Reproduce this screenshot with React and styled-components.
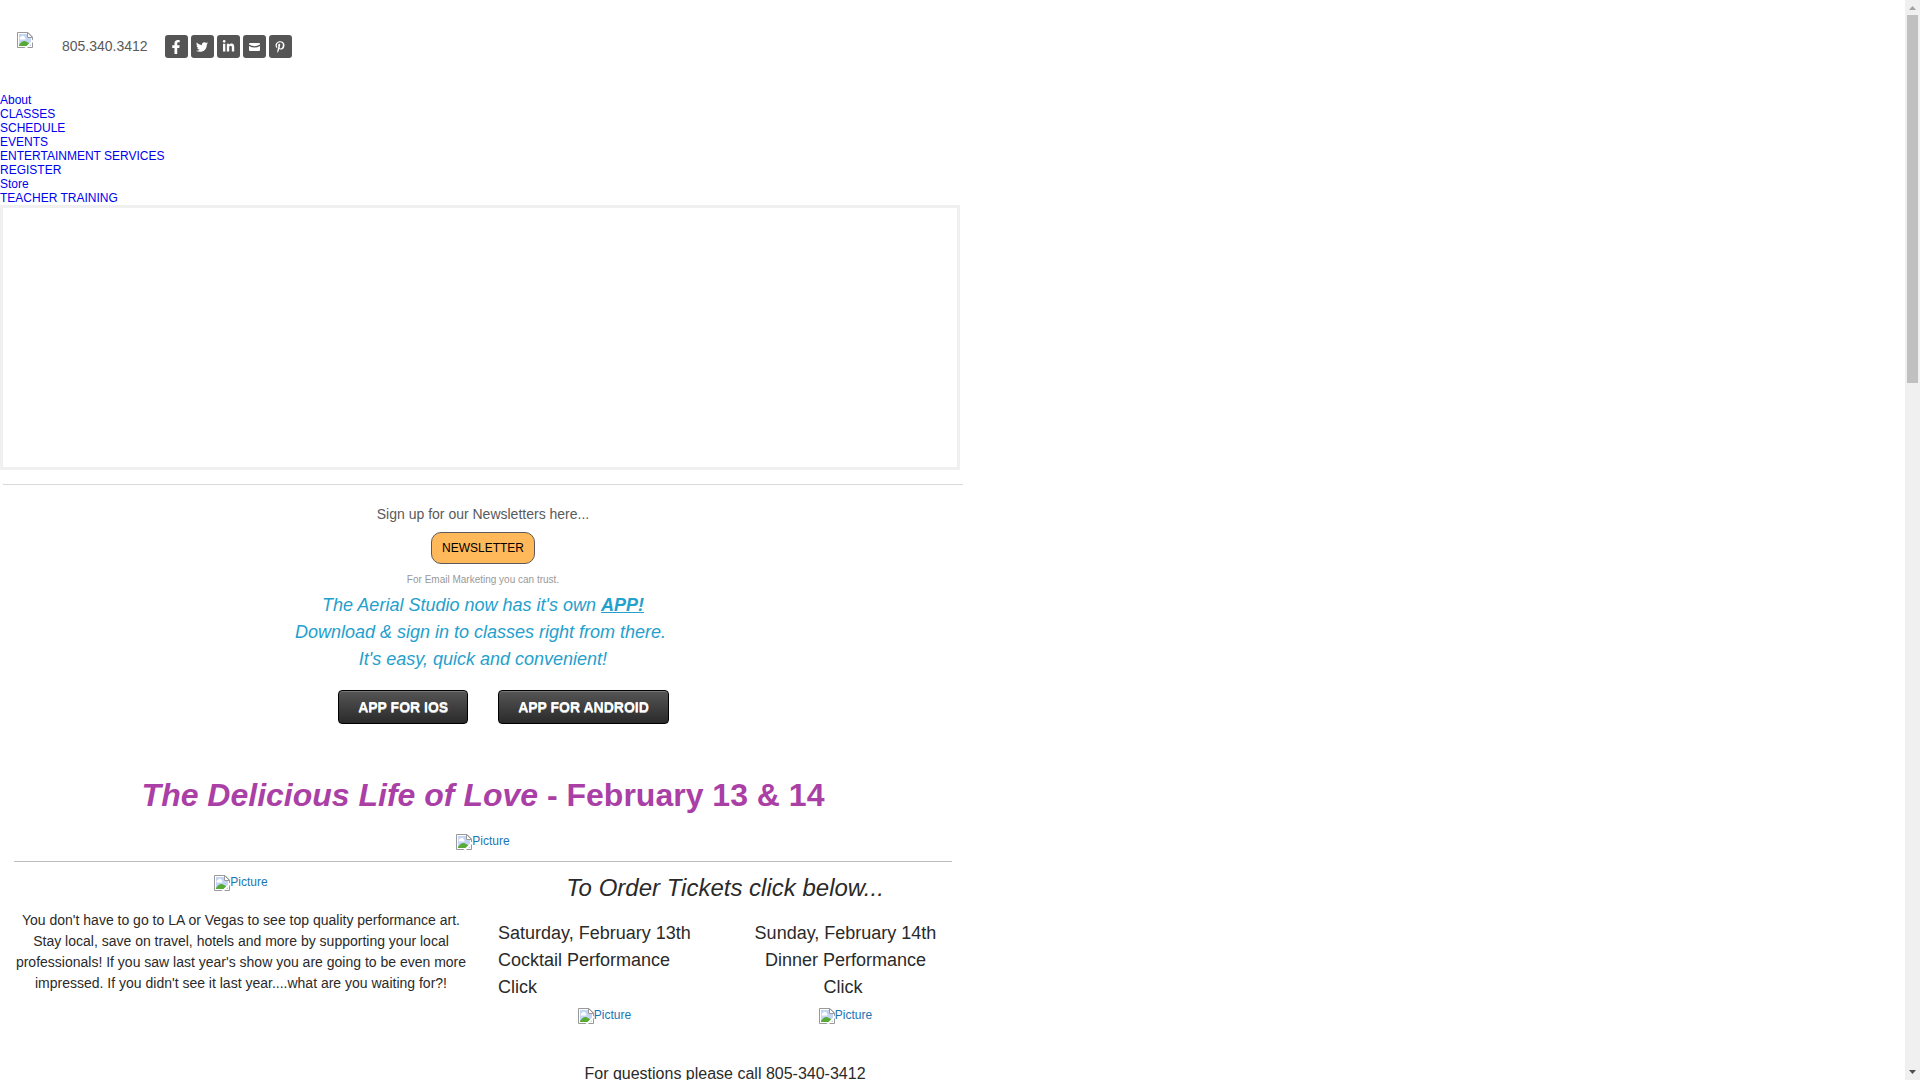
import React from 'react';
import styled, { createGlobalStyle } from 'styled-components';
import { FaFacebookF, FaTwitter, FaLinkedinIn, FaPinterestP } from 'react-icons/fa';

const navLinks = [
    'About',
    'CLASSES',
    'SCHEDULE',
    'EVENTS',
    'ENTERTAINMENT SERVICES',
    'REGISTER',
    'Store',
    'TEACHER TRAINING',
];

//Envelope for the mail button
const MailIcon = () => (
    <svg width="11" height="8" viewBox="0 0 11 8" fill="currentColor">
        <path d="M1 0h9a1 1 0 0 1 1 1v.5Q5.500 5 0 1.500V1a1 1 0 0 1 1-1z" />
        <path d="M0 3Q5.500 6.200 11 3v4a1 1 0 0 1-1 1H1a1 1 0 0 1-1-1z" />
    </svg>
);

const socialLinks = [
    { name: 'Facebook', icon: <FaFacebookF size={14} /> },
    { name: 'Twitter', icon: <FaTwitter size={12} /> },
    { name: 'LinkedIn', icon: <FaLinkedinIn size={13} /> },
    { name: 'Mail', icon: <MailIcon /> },
    { name: 'Pinterest', icon: <FaPinterestP size={12} /> },
];

//Missing image placeholder
const MissingIcon = () => (
    <svg width="16" height="16" viewBox="0 0 16 16">
        <path d="M.5.5H11L15.500 5v10.500H.5z" fill="#fff" stroke="#999" />
        <path d="M2 2h8v4h4v8H2z" fill="#c3d4f5" />
        <path d="M3 7.500a1.500 1.500 0 0 1 1-2.500 2 2 0 0 1 3.800.5A1.200 1.200 0 0 1 8 7.500z" fill="#fff" />
        <path d="M2 14v-1q4-6 8-3l2 1v3z" fill="#56ab36" />
        <path d="M7.500 16L16 7.500V10l-6 6z" fill="#fff" />
        <path d="M10.500.5V5.500H15.500z" fill="#fff" stroke="#999" />
    </svg>
);

const Picture = () => (
    <PictureLink href="#">
        <MissingIcon />
        Picture
    </PictureLink>
);

const App = () => (
    <Window>
        <GlobalStyle />
        <Page>
            <Header>
                <LogoLink href="#" aria-label="Home"><MissingIcon /></LogoLink>
                <Phone>805.340.3412</Phone>
                <Social>
                    {socialLinks.map(({ name, icon }) => (
                        <SocialLink href="#" key={name} aria-label={name}>{icon}</SocialLink>
                    ))}
                </Social>
            </Header>
            <Nav>
                {navLinks.map((link) => <NavLink href="#" key={link}>{link}</NavLink>)}
            </Nav>
            <Banner />

            {/* Newsletter and app */}
            <Signup>
                <SignupText>Sign up for our Newsletters here...</SignupText>
                <NewsletterButton>NEWSLETTER</NewsletterButton>
                <Trust>For Email Marketing you can trust.</Trust>
                <AppText>
                    The Aerial Studio now has it's own <a href="#">APP!</a><br />
                    Download &amp; sign in to classes right from there.&nbsp;<br />
                    It's easy, quick and convenient!
                </AppText>
                <AppButtons>
                    <AppButton>APP FOR IOS</AppButton>
                    <AppButton>APP FOR ANDROID</AppButton>
                </AppButtons>
            </Signup>

            {/* Show */}
            <Show>
                <Title><em>The Delicious Life of Love</em> - February 13 &amp; 14</Title>
                <Picture />
                <Divider />
                <Columns>
                    <Column>
                        <Picture />
                        <Paragraph>
                            You don't have to go to LA or Vegas to see top quality performance art.
                            Stay local, save on travel, hotels and more by supporting your local
                            professionals! If you saw last year's show you are going to be even more
                            impressed. If you didn't see it last year....what are you waiting for?!
                        </Paragraph>
                    </Column>
                    <Column>
                        <Subtitle>To Order Tickets click below...</Subtitle>
                        <Tickets>
                            <Ticket>
                                <TicketText $align="left">
                                    Saturday, February 13th<br />Cocktail Performance<br />Click
                                </TicketText>
                                <Picture />
                            </Ticket>
                            <Ticket>
                                <TicketText $align="center">
                                    Sunday, February 14th<br />Dinner Performance<br />Click&nbsp;
                                </TicketText>
                                <Picture />
                            </Ticket>
                        </Tickets>
                        <Questions>For questions please call 805-340-3412</Questions>
                    </Column>
                </Columns>
            </Show>
        </Page>
        <Scrollbar aria-hidden="true">
            <Arrow viewBox="0 0 15 15"><path d="M4 10h7L7.500 6z" fill="#a3a3a3" /></Arrow>
            <Track><Thumb /></Track>
            <Arrow viewBox="0 0 15 15"><path d="M4 5h7L7.500 9z" fill="#505050" /></Arrow>
        </Scrollbar>
    </Window>
);

export default App;

const GlobalStyle = createGlobalStyle`
  body {
      margin: 0;
      background: #fff;
      color: #2a2a2a;
      font-family: "Liberation Sans", Arial, sans-serif;
      font-size: 12px;
  }
`;

const Window = styled.div`
  display: flex;
  height: 100vh;
  overflow: hidden;
`;

const Page = styled.main`
  flex: 1;
  overflow: hidden;
`;

//Header
const Header = styled.header`
  display: flex;
  align-items: flex-start;
  height: 61px;
  padding: 32px 17px 0;
`;

const LogoLink = styled.a`
  display: flex;
  margin-right: 29px;
`;

const Phone = styled.span`
  margin: 3px 17px 0 0;
  font-size: 14px;
  line-height: 22px;
  color: #5a5a5a;
`;

const Social = styled.div`
  display: flex;
  gap: 3px;
  margin-top: 3px;
`;

const SocialLink = styled.a`
  display: flex;
  align-items: center;
  justify-content: center;
  width: 23px;
  height: 23px;
  border-radius: 3px;
  background: #555;
  color: #fff;
`;

//Navigation
const Nav = styled.nav`
  display: flex;
  flex-direction: column;
  align-items: flex-start;
`;

const NavLink = styled.a`
  line-height: 14px;
  color: #0000ee;
  text-decoration: none;
`;

//Empty banner frame
const Banner = styled.div`
  box-sizing: border-box;
  max-width: 960px;
  height: 265px;
  border: 3px solid #f0f0f0;
`;

//Newsletter
const Signup = styled.section`
  display: flex;
  flex-direction: column;
  align-items: center;
  max-width: 960px;
  margin: 14px 0 0 3px;
  padding-top: 18px;
  border-top: 1px solid #d9d9d9;
  text-align: center;
`;

const SignupText = styled.label`
  font-size: 14px;
  line-height: 22px;
  color: #5a5a5a;
`;

const NewsletterButton = styled.button`
  height: 32px;
  margin: 7px 0 8px;
  padding: 0 10px;
  border: 1px solid #5b5b5b;
  border-radius: 10px;
  background: #ffb85a;
  color: #000;
  font: inherit;
  cursor: pointer;
`;

const Trust = styled.span`
  font-size: 10px;
  line-height: 16px;
  color: #999;
`;

const AppText = styled.p`
  margin: 4px 0 17px;
  font-size: 18px;
  font-style: italic;
  line-height: 27px;
  color: #24a0cc;

  a {
      color: inherit;
      font-weight: 700;
  }
`;

const AppButtons = styled.div`
  display: flex;
  gap: 30px;
  padding-left: 41px;
`;

const AppButton = styled.button`
  height: 34px;
  padding: 0 19px;
  border: 1px solid #000;
  border-radius: 4px;
  background: linear-gradient(#555, #2a2a2a);
  box-shadow: inset 0 1px 0 #777;
  color: #fff;
  font: bold 14px "Liberation Sans", Arial, sans-serif;
  text-shadow: 0 1px 0 #ccc;
  cursor: pointer;
`;

//Show
const Show = styled.section`
  max-width: 938px;
  padding: 47px 14px 0;
  text-align: center;
`;

const Title = styled.h1`
  margin: 0 0 15px;
  font-size: 32px;
  line-height: 48px;
  color: #aa3fa6;
`;

const PictureLink = styled.a`
  display: flex;
  justify-content: center;
  line-height: 14px;
  color: #1a76b5;
  text-decoration: none;
`;

const Divider = styled.hr`
  height: 1px;
  margin: 11px 0 10px;
  border: 0;
  background: #bbb;
`;

const Columns = styled.div`
  display: grid;
  grid-template-columns: 1fr 1fr;
  gap: 30px;
`;

const Column = styled.div`
  padding-top: 3px;
`;

const Paragraph = styled.p`
  margin: 19px 0 0;
  font-size: 14px;
  line-height: 21px;
`;

const Subtitle = styled.h2`
  margin: 0 0 19px;
  font-size: 24px;
  font-style: italic;
  font-weight: 400;
  line-height: 26px;
`;

const Tickets = styled.div`
  display: grid;
  grid-template-columns: 1fr 1fr;
  gap: 28px;
`;

const Ticket = styled.div``;

const TicketText = styled.p`
  margin: 0 0 7px;
  font-size: 18px;
  line-height: 27px;
  text-align: ${(props) => props.$align};
`;

const Questions = styled.p`
  margin: 38px 0 0;
  font-size: 16px;
  line-height: 24px;
`;

//Scrollbar
const Scrollbar = styled.aside`
  display: flex;
  flex-direction: column;
  width: 15px;
  background: #f0f0f0;
`;

const Arrow = styled.svg`
  width: 15px;
  height: 15px;
`;

const Track = styled.div`
  flex: 1;
  padding: 0 2px;
`;

const Thumb = styled.div`
  height: 35%;
  background: #c0c0c0;
`;
